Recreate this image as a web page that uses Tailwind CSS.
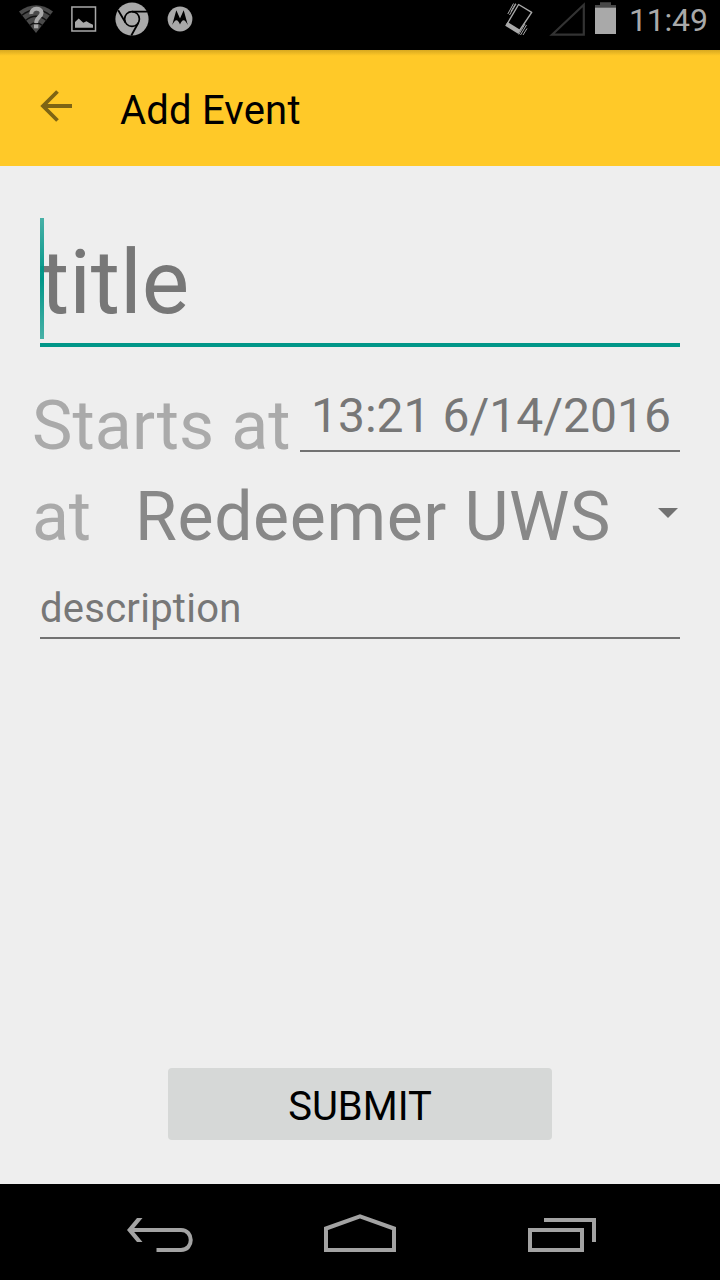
<!DOCTYPE html>
<html lang="en">
<head>
<meta charset="utf-8">
<title>Add Event</title>
<script src="https://cdn.jsdelivr.net/npm/@tailwindcss/browser@4"></script>
</head>
<body class="w-[720px] h-[1280px] flex flex-col bg-[#eeeeee] font-[Roboto,sans-serif] overflow-hidden whitespace-nowrap">
  <header class="h-[50px] shrink-0 bg-black flex justify-between text-[#a9a9a9]">
    <svg class="w-[240px] h-[50px]" viewBox="0 0 240 50" fill="none">
      <!-- wifi -->
      <path d="M19 11.500Q36 -1 53 11.500L36 33Z" fill="#4a4a4a"/>
      <g stroke="#111" stroke-width="1.300">
        <path d="M21.500 15.500Q36 4 50.500 15.500"/>
        <path d="M25.500 20.500Q36 12 46.500 20.500"/>
        <path d="M29.500 25.500Q36 20 42.500 25.500"/>
      </g>
      <path d="M31.300 14C30.800 7.500 41.600 7 41.600 12.800C41.600 17 36.200 17 36.200 23" stroke="#a9a9a9" stroke-width="4"/>
      <path d="M34 24.500h4.300v3.800H34z" fill="#a9a9a9"/>
      <!-- picture -->
      <path d="M71.900 6.900h23.600v24H71.900z" stroke="#a9a9a9" stroke-width="1.500"/>
      <path d="M75 27.700V22l3.700-3.500 4.600 4.200 3.200-1.500 3.300 2 3.200 1.500v3z" fill="#a9a9a9"/>
      <!-- chrome -->
      <circle cx="132" cy="19" r="16.600" fill="#a9a9a9"/>
      <circle cx="132" cy="19" r="7.400" stroke="#000" stroke-width="1.700"/>
      <path d="M132 11.600H147M125.600 22.700L118.200 10.200M138.400 22.700L131.300 35.500" stroke="#000" stroke-width="1.800"/>
      <!-- motorola -->
      <circle cx="180" cy="19" r="12.400" fill="#a9a9a9"/>
      <path d="M172.200 25L176.300 10.300L180 18.500L183.700 10.300L187.800 25Q185.500 20.500 183.600 20.300Q181.500 20.500 180 24.500Q178.500 20.500 176.400 20.300Q174.500 20.500 172.200 25Z" fill="#000"/>
    </svg>
    <div class="flex">
      <svg class="w-[149px] h-[50px]" viewBox="480 0 149 50" fill="none">
        <!-- vibrating phone -->
        <path d="M518.600 4.500L531.700 12.300L518.500 32L506.500 25Z" stroke="#a9a9a9" stroke-width="1.400" stroke-linejoin="round"/>
        <path d="M507.500 22L520.500 30L518.500 34L505.200 25.800Z" fill="#a9a9a9"/>
        <path d="M509.500 15L516 4M511 11.500L515.500 3.500M507.800 14L513.500 3.500M520.500 35L526.500 25M523 35L527 28.500M518.800 34.500L525 24" stroke="#a9a9a9" stroke-width="1"/>
        <path d="M552 34.700L583.800 4.800V34.700Z" stroke="#333" stroke-width="2.200"/>
        <path d="M595 7.500V5h5V2.300h11V5h5v2.500z" fill="#484848"/>
        <path d="M595 7.500h21V34h-21z" fill="#a9a9a9"/>
      </svg>
      <span class="w-[91px] text-[32px] leading-[40px] tracking-[-0.2px]">11:49</span>
    </div>
  </header>

  <div class="h-[116px] shrink-0 bg-[#ffc928] bg-linear-to-b from-[#d8a920] from-0% to-[#ffc928] to-5% flex">
    <svg class="w-[120px] h-[116px]" viewBox="0 50 120 116" fill="none" stroke="#7e6414" stroke-width="3.800">
      <path d="M72 106H43M57.500 91.500L43 106L57.500 120.500"/>
    </svg>
    <h1 class="pt-[37px] text-[40px] leading-[48px] tracking-[0.2px]">Add Event</h1>
  </div>

  <main class="flex-1 flex flex-col">
    <div class="relative mx-[40px] mt-[52px] h-[129px] border-b-4 border-[#009688] text-[#777777] text-[89.500px] leading-[130px] tracking-[-0.1px]">title
      <i class="absolute left-0 top-0 w-[4px] h-[121px] bg-linear-to-b from-[#009688]/70 via-[#009688] to-[#009688]/70"></i>
    </div>
    <div class="flex h-[105px] pl-[32px] pr-[40px] text-[#aaaaaa]">
      <label class="w-[268px] pt-[39px] text-[68px] leading-[80px] tracking-[0.1px]">Starts at</label>
      <div class="flex-1 h-[105px] border-b-2 border-[#727272] pl-[11px] pt-[39px] text-[48px] leading-[60px] text-[#777777]">13:21 6/14/2016</div>
    </div>
    <div class="flex h-[108px] pl-[32px] text-[68px] leading-[80px] text-[#aaaaaa] pt-[25px]">
      <label class="w-[103px] tracking-[-0.3px]">at</label>
      <div class="w-[523px] text-[#888888] tracking-[0.6px]">Redeemer UWS</div>
      <svg class="w-[20px] h-[10px] mt-[31px]" viewBox="0 0 20 10"><path d="M0 0H20L10 10Z" fill="#727272"/></svg>
    </div>
    <div class="mx-[40px] mt-[20px] h-[59px] border-b-2 border-[#727272] text-[40px] leading-[58px] tracking-[0.25px] text-[#777777]">description</div>
    <button class="mt-auto mb-[44px] mx-auto w-[384px] h-[72px] rounded-[4px] bg-[#d6d8d7] text-black text-[40px] leading-[70px] pt-[4px]">SUBMIT</button>
  </main>

  <footer class="h-[96px] shrink-0 bg-black">
    <svg class="w-[720px] h-[96px]" viewBox="0 1184 720 96" fill="none" stroke="#a3a3a3" stroke-width="4">
      <path d="M131 1230H181C194 1230 194 1250 181 1250H156.500"/>
      <path d="M137 1218H142.500L132.500 1230L142.500 1242H137L127 1230Z" fill="#a3a3a3" stroke="none"/>
      <path d="M326 1250V1228.500L360 1216.300L394 1228.500V1250Z"/>
      <path d="M530 1230H582V1250H530ZM544 1220H594V1242"/>
    </svg>
  </footer>
</body>
</html>
